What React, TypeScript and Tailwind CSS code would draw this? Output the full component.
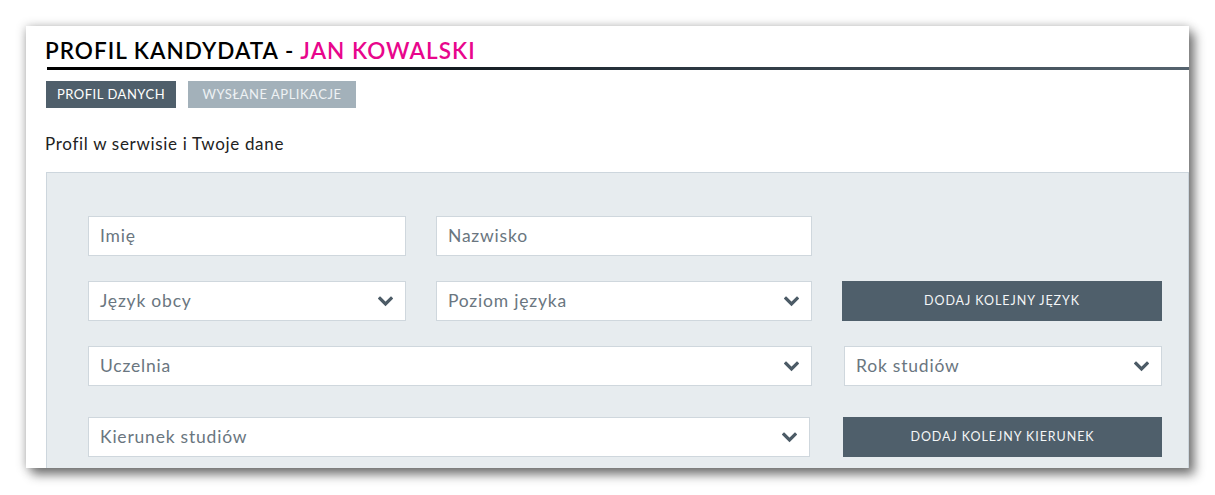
import React from 'react';

const Chevron: React.FC = () => (
  <svg width="15" height="11" viewBox="0 0 15 11" className="shrink-0">
    <path d="M2 2.5 L7.5 8 L13 2.5" fill="none" stroke="#4c5b66" strokeWidth="3.2" strokeLinecap="square" />
  </svg>
);

const Field: React.FC<{ label: string; select?: boolean; className?: string }> = ({ label, select, className }) => (
  <div className={`h-10 bg-white border border-[#cfd7dd] flex items-center justify-between pl-[11px] pr-[12px] ${className ?? ''}`}>
    <span className="text-[17.5px] text-[#6a7680] tracking-[0.045em]">{label}</span>
    {select && <Chevron />}
  </div>
);

const ActionButton: React.FC<{ label: string }> = ({ label }) => (
  <button className="h-10 bg-[#4f5f6b] text-[#f4f6f7] text-[12.5px] font-normal uppercase tracking-[0.075em] flex items-center justify-center">
    {label}
  </button>
);

export default function App() {
  return (
    <div className="w-[1215px] h-[495px] bg-white pt-[26px] pl-[26px]" style={{ fontFamily: 'Lato, "Open Sans", sans-serif' }}>
      <div className="w-[1163px] h-[442px] bg-white overflow-hidden shadow-[0_1px_10px_rgba(0,0,0,0.3),6px_7px_10px_rgba(0,0,0,0.45)]">
        <h1 className="pl-[19px] pt-[9px] h-[41px] text-[22.5px] font-semibold text-black leading-[32px] tracking-[0.045em]">
          PROFIL KANDYDATA - <span className="text-[#e8068c]">JAN KOWALSKI</span>
        </h1>
        <div className="ml-[21px] h-[3px] bg-gradient-to-r from-black via-[#26313a] to-[#55636e]" />
        <div className="flex gap-3 pl-[20px] pt-[11px]">
          <div className="w-[130px] h-[27px] bg-[#4f5f6b] text-white text-[13px] tracking-[0.04em] flex items-center justify-center">PROFIL DANYCH</div>
          <div className="w-[168px] h-[27px] bg-[#a3b1ba] text-[#eef2f4] text-[13px] tracking-[0.04em] flex items-center justify-center">WYSŁANE APLIKACJE</div>
        </div>
        <p className="pl-[19px] pt-[24px] text-[17px] text-[#222] leading-[24px] tracking-[0.04em]">Profil w serwisie i Twoje dane</p>
        <div className="ml-[20px] mt-[16px] h-[400px] bg-[#e7ecef] border border-[#cdd6dd] pl-[41px] pt-[43px]">
          <div className="grid grid-cols-[318px_376px_320px] gap-x-[30px]">
            <Field label="Imię" />
            <Field label="Nazwisko" />
            <div />
            <Field label="Język obcy" select className="mt-[25px]" />
            <Field label="Poziom języka" select className="mt-[25px]" />
            <div className="mt-[25px] grid"><ActionButton label="Dodaj kolejny język" /></div>
            <Field label="Uczelnia" select className="col-span-2 mt-[25px]" />
            <Field label="Rok studiów" select className="mt-[25px] ml-[2px]" />
            <Field label="Kierunek studiów" select className="col-span-2 mt-[31px] mr-[2px]" />
            <div className="mt-[31px] grid ml-px"><ActionButton label="Dodaj kolejny kierunek" /></div>
          </div>
        </div>
      </div>
    </div>
  );
}
